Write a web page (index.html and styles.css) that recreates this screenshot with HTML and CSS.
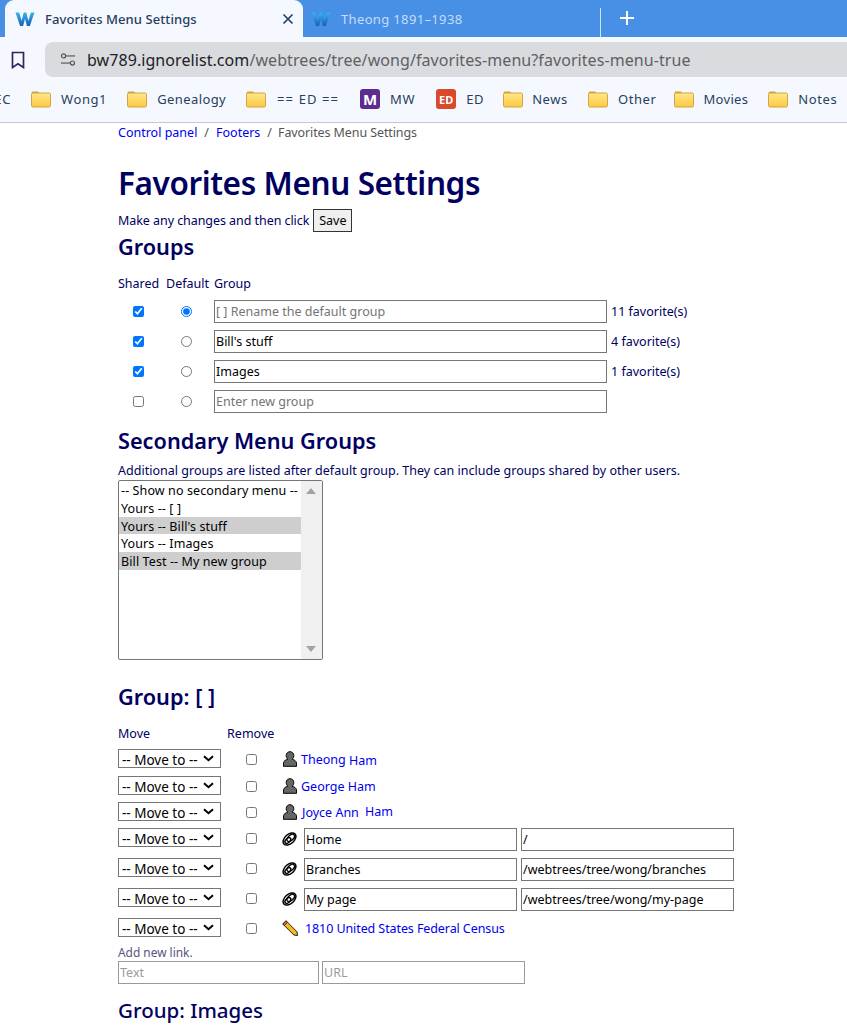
FILE: index.html
```html
<!DOCTYPE html>
<html lang="en">
<head>
<meta charset="utf-8">
<title>Favorites Menu Settings</title>
<link rel="stylesheet" href="styles.css">
</head>
<body>
<svg class="defs" width="0" height="0" aria-hidden="true">
  <defs>
    <linearGradient id="wg" x1="0" y1="0" x2="0" y2="1">
      <stop offset="0" stop-color="#35b5ec"/>
      <stop offset="1" stop-color="#1a5fb8"/>
    </linearGradient>
    <linearGradient id="fg" x1="0" y1="0" x2="0" y2="1">
      <stop offset="0" stop-color="#ffe88a"/>
      <stop offset="1" stop-color="#fdc93f"/>
    </linearGradient>
    <symbol id="w" viewBox="0 0 20 16">
      <path d="M0.5 1.5h3.6l2.6 8.2 2-8.2h2.6l2 8.2 2.6-8.2h3.6l-4.6 13.5h-3l-1.9-7.2-1.9 7.2h-3z" fill="url(#wg)"/>
    </symbol>
    <symbol id="folder" viewBox="0 0 20 18">
      <path d="M0.5 3a1.5 1.5 0 0 1 1.5-1.5h5l1.5 2h-8z" fill="#d9a21e"/>
      <rect x="0.5" y="3" width="19" height="14" rx="1.5" fill="url(#fg)" stroke="#cfa548" stroke-width="1"/>
    </symbol>
    <symbol id="person" viewBox="0 0 14 16">
      <path d="M7 .7c2.300 0 3.800 1.700 3.800 4 0 1.500-.7 2.800-1.700 3.500 2.300.6 4 1.800 4.300 3.300l.3 3.800H.3l.3-3.800c.3-1.500 2-2.700 4.300-3.300-1-.7-1.700-2-1.700-3.500 0-2.300 1.500-4 3.800-4z" fill="#666" stroke="#000" stroke-width="1"/>
    </symbol>
    <symbol id="chain" viewBox="0 0 16 16">
      <g fill="none" stroke="#000">
        <ellipse cx="8" cy="8" rx="8" ry="5" stroke-width="1.600" transform="rotate(-42 8 8)"/>
        <ellipse cx="9.300" cy="6.800" rx="4.800" ry="2.700" stroke-width="1.500" transform="rotate(-42 9.300 6.800)"/>
        <ellipse cx="6.300" cy="9.600" rx="3.700" ry="2.200" stroke-width="1.500" transform="rotate(-42 6.300 9.600)"/>
      </g>
    </symbol>
    <symbol id="pencil" viewBox="0 0 16 16">
      <path d="M4 .8L15 11.800 15.500 15.500 11.800 15 .8 4z" fill="#f5b81f" stroke="#222" stroke-width="1"/>
      <path d="M.8 4L4 .8 5.500 2.300 2.300 5.500z" fill="#d8605a" stroke="#222" stroke-width=".8"/>
    </symbol>
  </defs>
</svg>

<header class="browser">
  <div class="tabstrip">
    <div class="tab tab-active">
      <svg class="fav"><use href="#w"/></svg>
      <span class="tab-title">Favorites Menu Settings</span>
      <svg class="tab-close" viewBox="0 0 12 12"><path d="M1.500 1.500l9 9M10.500 1.500l-9 9" stroke="#26405f" stroke-width="1.700" fill="none"/></svg>
    </div>
    <div class="tab tab-idle">
      <svg class="fav"><use href="#w"/></svg>
      <span class="tab-title-idle">Theong 1891–1938</span>
    </div>
    <div class="tab-sep"></div>
    <svg class="tab-plus" viewBox="0 0 16 16"><path d="M8 1v14M1 8h14" stroke="#fff" stroke-width="2" fill="none"/></svg>
  </div>
  <div class="toolbar">
    <svg class="bookmark" viewBox="0 0 14 18"><path d="M1.500 1.500h11v15L7 12.800 1.500 16.500z" fill="none" stroke="#2c2560" stroke-width="1.700"/></svg>
    <div class="omnibox">
      <svg class="tune" viewBox="0 0 18 16"><g fill="none" stroke="#555" stroke-width="1.300"><circle cx="4" cy="4" r="2.300"/><path d="M6.500 4H17"/><circle cx="14" cy="12" r="2.300"/><path d="M1 12h10.500"/></g></svg>
      <span class="url"><span class="url-host">bw789.ignorelist.com</span>/webtrees/tree/wong/favorites-menu?favorites-menu-true</span>
    </div>
  </div>
  <nav class="bookmarks">
    <span class="bm bm-cut">EC</span>
    <span class="bm"><svg class="folder"><use href="#folder"/></svg>Wong1</span>
    <span class="bm bm-gen"><svg class="folder"><use href="#folder"/></svg>Genealogy</span>
    <span class="bm bm-ed2"><svg class="folder"><use href="#folder"/></svg>== ED ==</span>
    <span class="bm bm-mw"><span class="badge badge-mw">M</span>MW</span>
    <span class="bm bm-edit"><span class="badge badge-ed">ED</span>ED</span>
    <span class="bm bm-news"><svg class="folder"><use href="#folder"/></svg>News</span>
    <span class="bm bm-other"><svg class="folder"><use href="#folder"/></svg>Other</span>
    <span class="bm bm-movies"><svg class="folder"><use href="#folder"/></svg>Movies</span>
    <span class="bm"><svg class="folder"><use href="#folder"/></svg>Notes</span>
  </nav>
</header>

<main class="page">
  <div class="crumbs"><a href="#">Control panel</a><span class="sep">/</span><a href="#">Footers</a><span class="sep">/</span><span class="crumb-current">Favorites Menu Settings</span></div>
  <h1>Favorites Menu Settings</h1>
  <div class="intro"><span class="intro-text">Make any changes and then click</span><button class="save" type="button">Save</button></div>
  <h2 class="h-groups">Groups</h2>

  <div class="groups">
    <span class="gh">Shared</span><span class="gh">Default</span><span class="gh gh-wide">Group</span>

    <span class="cell"><input type="checkbox" checked></span>
    <span class="cell"><input type="radio" name="def" checked></span>
    <input class="text wide" type="text" placeholder="[ ] Rename the default group">
    <span class="count">11 favorite(s)</span>

    <span class="cell"><input type="checkbox" checked></span>
    <span class="cell"><input type="radio" name="def"></span>
    <input class="text wide" type="text" value="Bill's stuff">
    <span class="count">4 favorite(s)</span>

    <span class="cell"><input type="checkbox" checked></span>
    <span class="cell"><input type="radio" name="def"></span>
    <input class="text wide" type="text" value="Images">
    <span class="count">1 favorite(s)</span>

    <span class="cell"><input type="checkbox"></span>
    <span class="cell"><input type="radio" name="def"></span>
    <input class="text wide" type="text" placeholder="Enter new group">
    <span></span>
  </div>

  <h2 class="h-secondary">Secondary Menu Groups</h2>
  <p class="note">Additional groups are listed after default group. They can include groups shared by other users.</p>

  <div class="listbox">
    <div class="options">
      <div class="opt">-- Show no secondary menu --</div>
      <div class="opt">Yours -- [ ]</div>
      <div class="opt opt-sel">Yours -- Bill's stuff</div>
      <div class="opt">Yours -- Images</div>
      <div class="opt opt-sel">Bill Test -- My new group</div>
    </div>
    <div class="scroll"><span class="arrow-up"></span><span class="arrow-down"></span></div>
  </div>

  <h2 class="h-group">Group: [ ]</h2>

  <div class="mhead"><span>Move</span><span class="mh-remove">Remove</span></div>
  <div class="moves">
    <div class="mrow r-first">
      <select class="move"><option>-- Move to --</option></select>
      <span class="rm"><input type="checkbox"></span>
      <svg class="ico ico-person"><use href="#person"/></svg>
      <a class="fav-link" href="#">Theong <span class="low">Ham</span></a>
    </div>
    <div class="mrow r-person">
      <select class="move"><option>-- Move to --</option></select>
      <span class="rm"><input type="checkbox"></span>
      <svg class="ico ico-person"><use href="#person"/></svg>
      <a class="fav-link" href="#">George Ham</a>
    </div>
    <div class="mrow r-person">
      <select class="move"><option>-- Move to --</option></select>
      <span class="rm"><input type="checkbox"></span>
      <svg class="ico ico-person"><use href="#person"/></svg>
      <a class="fav-link joyce" href="#">Joyce Ann <span class="gap">Ham</span></a>
    </div>
    <div class="mrow r-link">
      <select class="move"><option>-- Move to --</option></select>
      <span class="rm"><input type="checkbox"></span>
      <svg class="ico ico-chain"><use href="#chain"/></svg>
      <input class="text link" type="text" value="Home"><input class="text link" type="text" value="/">
    </div>
    <div class="mrow r-link">
      <select class="move"><option>-- Move to --</option></select>
      <span class="rm"><input type="checkbox"></span>
      <svg class="ico ico-chain"><use href="#chain"/></svg>
      <input class="text link" type="text" value="Branches"><input class="text link" type="text" value="/webtrees/tree/wong/branches">
    </div>
    <div class="mrow r-link">
      <select class="move"><option>-- Move to --</option></select>
      <span class="rm"><input type="checkbox"></span>
      <svg class="ico ico-chain"><use href="#chain"/></svg>
      <input class="text link" type="text" value="My page"><input class="text link" type="text" value="/webtrees/tree/wong/my-page">
    </div>
    <div class="mrow r-last">
      <select class="move"><option>-- Move to --</option></select>
      <span class="rm"><input type="checkbox"></span>
      <svg class="ico"><use href="#pencil"/></svg>
      <a class="fav-link census" href="#">1810 United States Federal Census</a>
    </div>
  </div>

  <div class="add-label">Add new link.</div>
  <div class="add-row">
    <input class="text add" type="text" placeholder="Text"><input class="text add add-url" type="text" placeholder="URL">
  </div>
  <h2 class="h-images">Group: Images</h2>
</main>
</body>
</html>
```
FILE: styles.css
```css
* { box-sizing: border-box; }
html, body { margin: 0; padding: 0; height: 1028px; overflow: hidden; background: #fff; }
body { font-family: "Noto Sans", "Liberation Sans", sans-serif; font-size: 12.5px; color: #000060; }
.defs { position: absolute; }
input[type="checkbox"], input[type="radio"] { width: 11px; height: 11px; margin: 0; }

/* browser chrome */
.browser { font-family: "Noto Sans", sans-serif; background: #f5f8fe; border-bottom: 1px solid #c6c6da; height: 123px; }
.tabstrip { height: 37px; background: #4790e6; display: flex; align-items: stretch; padding-left: 5px; }
.tab { display: flex; align-items: center; flex: none; }
.tab-active { width: 298px; background: #f5f8fe; border-radius: 9px 9px 0 0; padding-left: 10px; }
.fav { width: 20px; height: 16px; flex: none; }
.tab-title { margin-left: 10px; font-size: 13px; font-weight: 500; letter-spacing: .08px; color: #26405f; width: 237px; white-space: nowrap; }
.tab-close { width: 12px; height: 12px; }
.tab-idle { width: 297px; padding-left: 8px; }
.tab-title-idle { margin-left: 10px; font-size: 13px; letter-spacing: .35px; color: #c6dcf8; }
.tab-sep { width: 1px; height: 29px; margin-top: 8px; background: #cfe2fa; }
.tab-plus { width: 16px; height: 16px; margin: 10px 0 0 18px; }
.toolbar { height: 45px; display: flex; align-items: flex-start; padding-top: 5px; }
.bookmark { width: 14px; height: 18px; margin: 9px 0 0 11px; flex: none; }
.omnibox { margin-left: 20px; flex: 1; height: 35px; background: #dadbdf; border-radius: 8px 0 0 8px; display: flex; align-items: center; padding-left: 15px; }
.tune { width: 16px; height: 15px; flex: none; }
.url { margin-left: 11px; font-size: 16px; letter-spacing: .07px; color: #5f6064; white-space: nowrap; }
.url-host { color: #202124; }
.bookmarks { height: 34px; display: flex; align-items: center; white-space: nowrap; overflow: hidden; }
.bm { display: flex; align-items: center; flex: none; font-size: 13px; letter-spacing: .6px; color: #26405f; margin-right: 20px; }
.bm-cut { width: 11px; overflow: hidden; justify-content: flex-end; }
.folder { width: 20px; height: 18px; margin-right: 10px; flex: none; }
.bm-gen { letter-spacing: .4px; }
.bm-ed2 { letter-spacing: 1.1px; margin-right: 21px; }
.bm-ed2 .folder { margin-right: 11px; }
.bm-mw { margin-right: 21px; }
.bm-edit { margin-right: 19px; }
.bm-news .folder { margin-right: 9px; }
.bm-other { margin-right: 17px; }
.bm-movies { letter-spacing: .3px; margin-right: 20px; }
.badge { width: 20px; height: 20px; border-radius: 3px; color: #fff; font-weight: 700; display: flex; align-items: center; justify-content: center; margin-right: 10px; letter-spacing: 0; }
.badge-mw { background: #5c2d8c; font-size: 15px; }
.badge-ed { background: #d9492b; font-size: 11px; }

/* page */
.page { padding-left: 118px; }
a { color: #0000ee; text-decoration: none; }
.crumbs { height: 19px; line-height: 19px; font-size: 12.5px; }
.sep { margin: 0 7px; color: #555; }
.crumb-current { color: #555; letter-spacing: -.1px; margin-left: -1px; }
h1 { margin: 20px 0 0; font-size: 31.5px; letter-spacing: -.4px; line-height: 42px; font-weight: 600; color: #000060; }
.intro { display: flex; align-items: center; height: 23px; margin-top: 5px; white-space: pre; }
.intro-text { letter-spacing: -.06px; margin-right: 4px; }
.save { font: inherit; color: #000; height: 23px; width: 39px; padding: 0; background: #efefef; border: 1px solid #333; border-radius: 0; }
h2 { margin: 0; font-size: 21.7px; line-height: 30px; font-weight: 600; color: #000060; }
.groups { display: grid; grid-template-columns: 48px 48px 393px auto; margin-top: 13px; align-items: center; justify-content: start; }
.gh { height: 18px; line-height: 18px; margin-bottom: 3px; }
.gh-wide { grid-column: 3 / 5; }
.cell { display: flex; justify-content: center; align-items: center; height: 30px; padding-right: 8px; }
.text { font-family: inherit; font-size: 12.5px; color: #000; height: 23px; padding: 0 1px; border: 1px solid #767676; border-radius: 0; background: #fff; outline: 0; }
.text::placeholder { color: #757575; }
.wide { width: 393px; }
.count { padding-left: 4px; white-space: nowrap; }
.h-secondary { margin-top: 10px; }
.note { margin: 6px 0 0; height: 18px; line-height: 18px; letter-spacing: .02px; }
.listbox { width: 205px; height: 180px; border: 1px solid #767676; border-radius: 2px; display: flex; background: #fff; color: #000; }
.options { flex: 1; letter-spacing: .1px; }
.opt { height: 17.8px; line-height: 19.8px; padding-left: 2px; white-space: nowrap; }
.opt-sel { background: #cecece; }
.scroll { width: 21px; background: #f0f0f0; position: relative; }
.arrow-up, .arrow-down { position: absolute; left: 5px; width: 0; height: 0; border-left: 5px solid transparent; border-right: 5px solid transparent; }
.arrow-up { top: 7px; border-bottom: 6px solid #a3a3a3; }
.arrow-down { bottom: 7px; border-top: 6px solid #a3a3a3; }
.h-group { margin-top: 22px; }
.mhead { display: flex; height: 18px; line-height: 18px; margin-top: 13px; margin-bottom: 6px; }
.mh-remove { margin-left: 77px; }
.mrow { display: flex; align-items: flex-start; }
.r-first { height: 27px; }
.r-person { height: 26px; }
.r-link { height: 30px; }
.r-last { height: 25px; }
.move { appearance: none; width: 103px; height: 19px; flex: none; font-family: inherit; font-size: 13.5px; line-height: 17px; color: #000; border: 1px solid #767676; border-radius: 0; padding: 2px 0 0 3px; background: #fff url("data:image/svg+xml,%3Csvg xmlns='http://www.w3.org/2000/svg' width='11' height='7' viewBox='0 0 11 7'%3E%3Cpath d='M1 1.200l4.500 4 4.500-4' fill='none' stroke='%23000' stroke-width='2'/%3E%3C/svg%3E") no-repeat right 6px center; }
.rm { width: 60px; height: 21px; display: flex; justify-content: center; align-items: center; flex: none; }
.ico { width: 16px; height: 16px; margin: 2px 0 0 1px; flex: none; }
.ico-person { width: 14px; margin: 2px 0 0 2px; }
.ico-chain { width: 15px; margin: 3px 7px 0 1px; }
.fav-link { margin-left: 4px; line-height: 21px; white-space: nowrap; }
.joyce { margin-left: 5px; }
.low { position: relative; top: 1px; }
.gap { margin-left: 3px; position: relative; top: -1px; }
.census { margin-left: 7px; letter-spacing: -.09px; }
.link { width: 213px; margin-right: 4px; flex: none; }
.add-label { height: 18px; line-height: 18px; font-size: 11.9px; color: #55557f; }
.add-row { display: flex; }
.add { width: 201px; border-color: #9a9a9a; }
.add::placeholder { color: #9c9c9c; }
.add-url { width: 203px; margin-left: 3px; margin-right: 0; }
.h-images { margin-top: 11px; font-size: 20.5px; font-weight: 500; }
```
